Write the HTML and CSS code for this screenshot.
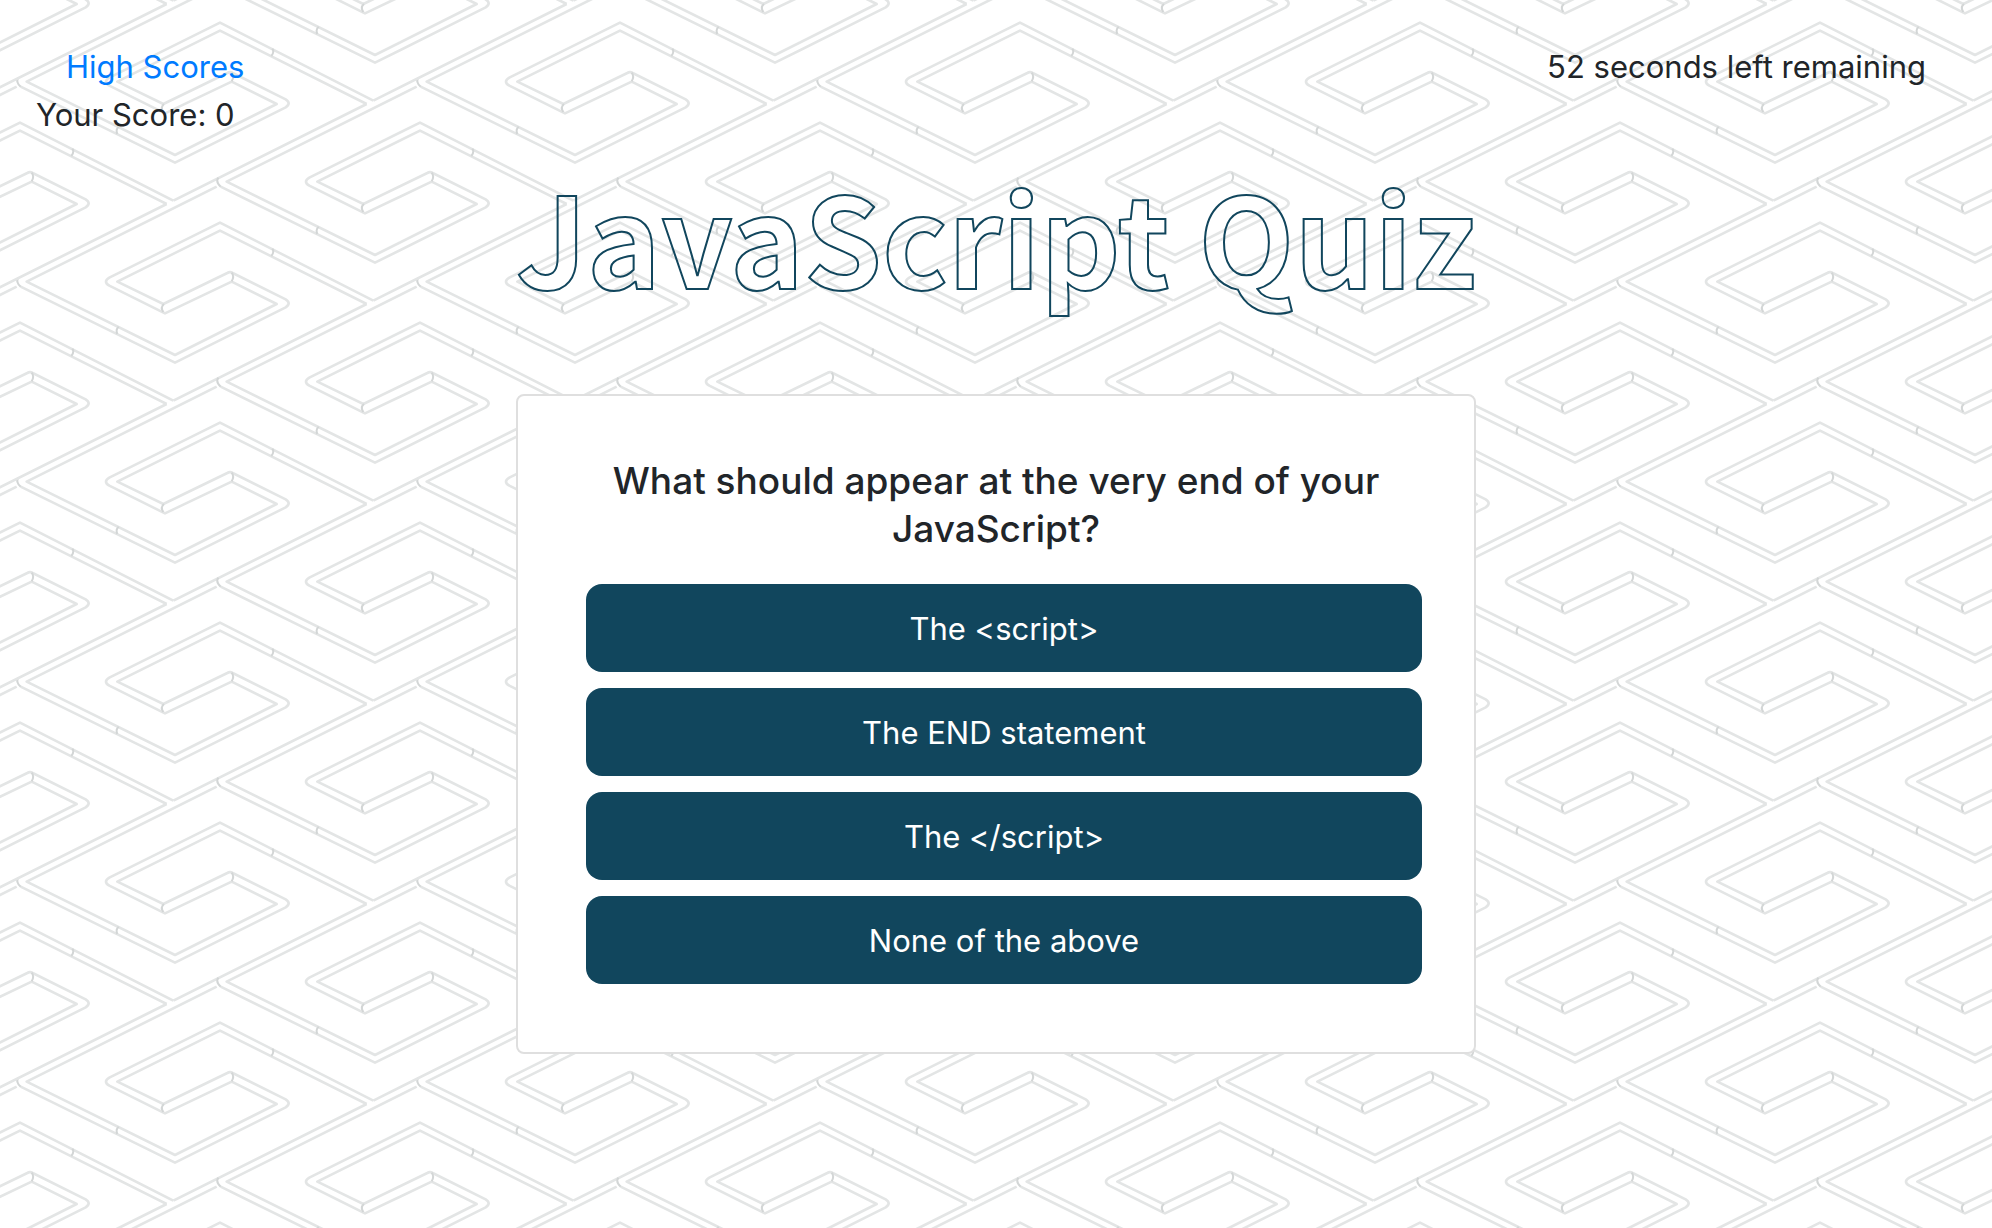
FILE: index.html
```html
<!DOCTYPE html>
<html lang="en">
<head>
<meta charset="utf-8">
<meta name="viewport" content="width=device-width, initial-scale=1">
<title>JavaScript Quiz</title>
<link rel="stylesheet" href="styles.css">
</head>
<body>
<header class="topbar">
  <div class="topbar-row">
    <a class="scores-link" href="#scores">High Scores</a>
    <span class="timer">52 seconds left remaining</span>
  </div>
  <div class="score">Your Score: 0</div>
</header>
<main class="quiz">
  <h1 class="quiz-title">JavaScript Quiz</h1>
  <section class="card">
    <h2 class="question">What should appear at the very end of your JavaScript?</h2>
    <div class="answers">
      <button class="answer" type="button">The &lt;script&gt;</button>
      <button class="answer" type="button">The END statement</button>
      <button class="answer" type="button">The &lt;/script&gt;</button>
      <button class="answer" type="button">None of the above</button>
    </div>
  </section>
</main>
</body>
</html>
```
FILE: styles.css
```css
*, *::before, *::after {
  box-sizing: border-box;
}

body {
  margin: 0;
  min-height: 100vh;
  color: #212529;
  font: 400 31px/48px Inter, "Liberation Sans", sans-serif;
  background-color: #fff;
  background-size: 400px 200px;
  background-image: url("data:image/svg+xml,%3Csvg xmlns='http://www.w3.org/2000/svg' xmlns:xlink='http://www.w3.org/1999/xlink' width='400' height='200' viewBox='0 0 1200 600'%3E%3Cdefs%3E%3Cg id='m' fill='none' stroke-linejoin='round'%3E%3Cpath stroke='%23e3e5e5' stroke-width='8' d='M520 302L1100 12M650 260L80 545L525 765L830 612L695 545L495 640L328 557Q308 545 328 533L660 368L1120 602M1100 612L660 392L352 545L490 612L682 519Q690 514 698 519L857 598Q875 610 857 622L525 788L62 560'/%3E%3Cpath stroke='%23d3d6d6' stroke-width='6' d='M55 533Q46 546 62 560M356 680Q346 688 352 702M817 446Q824 456 814 468M695 518Q704 530 695 544M492 612Q480 622 490 636'/%3E%3C/g%3E%3C/defs%3E%3Cuse xlink:href='%23m' y='-300'/%3E%3Cuse xlink:href='%23m' y='300'/%3E%3Cuse xlink:href='%23m' y='-900'/%3E%3Cuse xlink:href='%23m' x='600'/%3E%3Cuse xlink:href='%23m' x='600' y='-600'/%3E%3Cuse xlink:href='%23m' x='-600'/%3E%3Cuse xlink:href='%23m' x='-600' y='-600'/%3E%3Cuse xlink:href='%23m' x='-1200' y='-300'/%3E%3Cuse xlink:href='%23m' x='-1200' y='300'/%3E%3C/svg%3E");
}

.topbar {
  padding: 43px 36px 0;
}

.topbar-row {
  display: flex;
  justify-content: space-between;
  padding: 0 30px;
}

.scores-link {
  color: #007bff;
  text-decoration: none;
}

.quiz {
  max-width: 960px;
  margin: 0 auto;
}

.quiz-title {
  margin: 0 0 63px;
  color: transparent;
  font: 700 125px/192px "Noto Sans CJK JP", "Liberation Sans", sans-serif;
  text-align: center;
  white-space: nowrap;
  -webkit-text-stroke: 2px #11465d;
}

.card {
  padding: 61px 52px 68px;
  background: #fff;
  border: 2px solid #dfdfdf;
  border-radius: 8px;
}

.question {
  margin: 0 0 31px;
  font-size: 37px;
  font-weight: 500;
  line-height: 48px;
  text-align: center;
}

.answers {
  display: grid;
  gap: 16px;
  margin-left: 16px;
}

.answer {
  padding: 21px 20px 19px;
  color: #fff;
  font: inherit;
  background: #11465d;
  border: 0;
  border-radius: 16px;
  cursor: pointer;
}
```
